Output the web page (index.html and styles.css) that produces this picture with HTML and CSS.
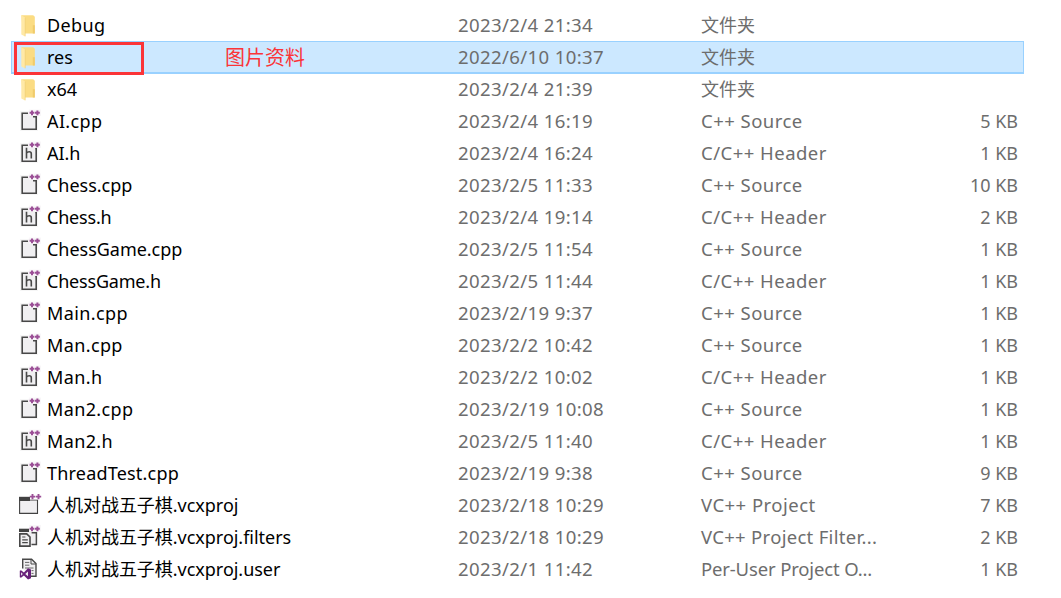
FILE: index.html
```html
<!DOCTYPE html>
<html lang="zh">
<head>
<meta charset="utf-8">
<title>Files</title>
<link rel="stylesheet" href="styles.css">
</head>
<body>
<svg class="defs" aria-hidden="true">
  <symbol id="plus2" viewBox="0 0 24 24"><path d="M11.6 3.8h4.8M14 1.4v4.8M17 3.8h4.8M19.4 1.4v4.8" fill="none" stroke="#9b4f96" stroke-width="2"/></symbol>
  <symbol id="folder" viewBox="0 0 24 24"><path d="M3.3 2.2H15.2L16.8 3.8V20.5H5z" fill="#fbdc83"/><path d="M14.8 12.2h2v8.3h-2z" fill="#f0cb6c"/><path d="M3.3 2.2L7.2 4.6V23.6L3.3 21.4z" fill="#ffe9a6"/><path d="M7.2 4.6V23.3" stroke="#eccb70" stroke-width=".6"/></symbol>
  <symbol id="page" viewBox="0 0 24 24"><path d="M2 2H20V22H2z" fill="#f6f6f6"/><path d="M4.3 4.2H18.2V20.2H4.3z" fill="#f0eff1"/><path d="M10 4.2H4.2V20.2H18.2V7.8H15" fill="none" stroke="#484848" stroke-width="1.6"/><path d="M10.8.5H23V6.8H10.8z" fill="#f8f6f8"/><use href="#plus2"/></symbol>
  <symbol id="cpp" viewBox="0 0 24 24"><use href="#page"/></symbol>
  <symbol id="hdr" viewBox="0 0 24 24"><use href="#page"/><path d="M13.8 7H17.2V9H13.8z" fill="#f0eff1"/><path d="M8.5 6.8V17.4M8.5 12.2C9.4 10.4 13.3 9.9 13.3 12.8V17.4" fill="none" stroke="#484848" stroke-width="1.6"/></symbol>
  <symbol id="proj" viewBox="0 0 24 24"><path d="M1.6 7H19.5V20.4H1.6z" fill="#f0eff1" stroke="#424242" stroke-width="1.1"/><path d="M1 3.8H12V8H1z" fill="#424242"/><path d="M12 0H24V6.4H12z" fill="#fff"/><path d="M11.8 3.6h5.4M14.5 .9v5.4M17.8 3.6h5.4M20.5 .9v5.4" fill="none" stroke="#9b4f96" stroke-width="1.9"/></symbol>
  <symbol id="filters" viewBox="0 0 24 24"><path d="M2 4H18.6V19.6H2z" fill="#f0eff1"/><path d="M1 3.7H11V7H1z" fill="#424242"/><path d="M13.5 19.4H18.4V7.8H13.6" fill="none" stroke="#484848" stroke-width="1.5"/><path d="M1.8 8.9H8.7L12 12V21.1H1.8z" fill="#f0eff1" stroke="#484848" stroke-width="1.6"/><path d="M4.2 12H7.4M4.2 14.8H9.8M4.2 17.7H9.8" stroke="#484848" stroke-width="1.2"/><path d="M11.2 0H23V6.4H11.2z" fill="#f8f6f8"/><use href="#plus2"/></symbol>
  <symbol id="user" viewBox="0 0 24 24"><path d="M4.7 11.5V2.2H13.6L18 6.5V19.3H12.8" fill="#f0eff1" stroke="#484848" stroke-width="1.4"/><path d="M13 2.4V7H17.8" fill="none" stroke="#484848" stroke-width="1"/><path d="M7 5.4H11.3M7 8.2H11.3M7 11H15.5M13.5 13.6H15.5M13.5 16.4H15.5" stroke="#666" stroke-width="1"/><path d="M10 11.3L13 12.5V21.2L10 22.4L5.9 18.5L3 20.8L1.8 20.2V13.8L3 13.2L5.9 15.4z" fill="#68217a"/><path d="M3.1 15.2V18.8L4.8 17zM10 14.6V19.2L7.2 17z" fill="#f0eff1"/></symbol>
</svg>
<main class="list">
  <div class="row"><svg class="icon"><use href="#folder"/></svg><span class="name loose">Debug</span><span class="date">2023/2/4 21:34</span><span class="type plain">文件夹</span><span class="size"></span></div>
  <div class="row selected"><svg class="icon"><use href="#folder"/></svg><span class="name">res</span><span class="date">2022/6/10 10:37</span><span class="type plain">文件夹</span><span class="size"></span><div class="mark"></div><div class="note">图片资料</div></div>
  <div class="row"><svg class="icon"><use href="#folder"/></svg><span class="name">x64</span><span class="date">2023/2/4 21:39</span><span class="type plain">文件夹</span><span class="size"></span></div>
  <div class="row"><svg class="icon"><use href="#cpp"/></svg><span class="name loose">AI.cpp</span><span class="date">2023/2/4 16:19</span><span class="type">C++ Source</span><span class="size">5 KB</span></div>
  <div class="row"><svg class="icon"><use href="#hdr"/></svg><span class="name">AI.h</span><span class="date">2023/2/4 16:24</span><span class="type">C/C++ Header</span><span class="size">1 KB</span></div>
  <div class="row"><svg class="icon"><use href="#cpp"/></svg><span class="name">Chess.cpp</span><span class="date">2023/2/5 11:33</span><span class="type">C++ Source</span><span class="size">10 KB</span></div>
  <div class="row"><svg class="icon"><use href="#hdr"/></svg><span class="name tight">Chess.h</span><span class="date">2023/2/4 19:14</span><span class="type">C/C++ Header</span><span class="size">2 KB</span></div>
  <div class="row"><svg class="icon"><use href="#cpp"/></svg><span class="name">ChessGame.cpp</span><span class="date">2023/2/5 11:54</span><span class="type">C++ Source</span><span class="size">1 KB</span></div>
  <div class="row"><svg class="icon"><use href="#hdr"/></svg><span class="name tight">ChessGame.h</span><span class="date">2023/2/5 11:44</span><span class="type">C/C++ Header</span><span class="size">1 KB</span></div>
  <div class="row"><svg class="icon"><use href="#cpp"/></svg><span class="name loose">Main.cpp</span><span class="date">2023/2/19 9:37</span><span class="type">C++ Source</span><span class="size">1 KB</span></div>
  <div class="row"><svg class="icon"><use href="#cpp"/></svg><span class="name loose">Man.cpp</span><span class="date">2023/2/2 10:42</span><span class="type">C++ Source</span><span class="size">1 KB</span></div>
  <div class="row"><svg class="icon"><use href="#hdr"/></svg><span class="name loose">Man.h</span><span class="date">2023/2/2 10:02</span><span class="type">C/C++ Header</span><span class="size">1 KB</span></div>
  <div class="row"><svg class="icon"><use href="#cpp"/></svg><span class="name loose">Man2.cpp</span><span class="date">2023/2/19 10:08</span><span class="type">C++ Source</span><span class="size">1 KB</span></div>
  <div class="row"><svg class="icon"><use href="#hdr"/></svg><span class="name loose">Man2.h</span><span class="date">2023/2/5 11:40</span><span class="type">C/C++ Header</span><span class="size">1 KB</span></div>
  <div class="row"><svg class="icon"><use href="#cpp"/></svg><span class="name open">ThreadTest.cpp</span><span class="date">2023/2/19 9:38</span><span class="type">C++ Source</span><span class="size">9 KB</span></div>
  <div class="row"><svg class="icon"><use href="#proj"/></svg><span class="name">人机对战五子棋.vcxproj</span><span class="date">2023/2/18 10:29</span><span class="type">VC++ Project</span><span class="size">7 KB</span></div>
  <div class="row"><svg class="icon"><use href="#filters"/></svg><span class="name">人机对战五子棋.vcxproj.filters</span><span class="date">2023/2/18 10:29</span><span class="type medium">VC++ Project Filter...</span><span class="size">2 KB</span></div>
  <div class="row"><svg class="icon"><use href="#user"/></svg><span class="name">人机对战五子棋.vcxproj.user</span><span class="date">2023/2/1 11:42</span><span class="type narrow">Per-User Project O...</span><span class="size">1 KB</span></div>
</main>
</body>
</html>
```
FILE: styles.css
```css
body {
  margin: 0;
  background: #fff;
  color: #000;
  font: 18px/32px "Noto Sans", "Noto Sans CJK SC", sans-serif;
}
.defs { display: none; }
.list { padding: 9px 0 0 11px; width: 1013px; }
.row {
  position: relative;
  display: grid;
  grid-template-columns: 36px 411px 243px 223px 94px;
  height: 32px;
  white-space: nowrap;
}
.selected { background: #cce8ff; box-shadow: inset 0 0 0 1px #99d1ff, 0 1px 0 #99d1ff; }
.icon { width: 24px; height: 24px; margin: 4px 0 0 7px; }
.name { letter-spacing: -0.03px; }
.tight { letter-spacing: -0.2px; }
.open { letter-spacing: 0.2px; }
.loose { letter-spacing: 0.38px; }
.date, .type, .size { color: #6d6d6d; }
.date { font-size: 18.6px; letter-spacing: 0.36px; }
.type { font-size: 18.5px; letter-spacing: 0.47px; }
.medium { letter-spacing: 0.3px; }
.narrow { letter-spacing: -0.15px; }
.plain { font-size: 18px; letter-spacing: 0; }
.size { text-align: right; }
.mark {
  position: absolute;
  left: 3px;
  top: 1px;
  width: 130px;
  height: 33px;
  box-sizing: border-box;
  border: 3px solid #fb3438;
}
.note {
  position: absolute;
  left: 214px;
  top: 1px;
  font-size: 20px;
  color: #fb3438;
}
```
